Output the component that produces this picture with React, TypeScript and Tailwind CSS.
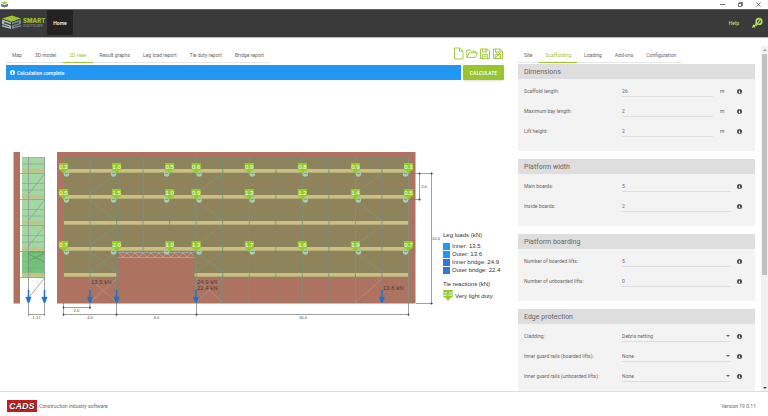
// src/App.tsx

import React from 'react';

interface Field {
  id: string;
  label: string;
  value: string;
  unit?: string;
  select?: boolean;
}

interface Section {
  title: string;
  fields: Field[];
}

const viewTabs = ['Map', '3D model', '2D view', 'Result graphs', 'Leg load report', 'Tie duty report', 'Bridge report'];
const settingTabs = ['Site', 'Scaffolding', 'Loading', 'Add-ons', 'Configuration'];

const sections: Section[] = [
  {
    title: 'Dimensions',
    fields: [
      { id: 'length', label: 'Scaffold length:', value: '26', unit: 'm' },
      { id: 'bay', label: 'Maximum bay length:', value: '2', unit: 'm' },
      { id: 'lift', label: 'Lift height:', value: '2', unit: 'm' },
    ],
  },
  {
    title: 'Platform width',
    fields: [
      { id: 'main-boards', label: 'Main boards:', value: '5' },
      { id: 'inside-boards', label: 'Inside boards:', value: '2' },
    ],
  },
  {
    title: 'Platform boarding',
    fields: [
      { id: 'boarded', label: 'Number of boarded lifts:', value: '5' },
      { id: 'unboarded', label: 'Number of unboarded lifts:', value: '0' },
    ],
  },
  {
    title: 'Edge protection',
    fields: [
      { id: 'cladding', label: 'Cladding:', value: 'Debris netting', select: true },
      { id: 'rails-boarded', label: 'Inner guard rails (boarded lifts):', value: 'None', select: true },
      { id: 'rails-unboarded', label: 'Inner guard rails (unboarded lifts):', value: 'None', select: true },
    ],
  },
];

const legLoads = [
  { label: 'Inner: 13.5', swatch: 'bg-[#2196f3]' },
  { label: 'Outer: 13.6', swatch: 'bg-[#2196f3]' },
  { label: 'Inner bridge: 24.9', swatch: 'bg-[#2f78d4]' },
  { label: 'Outer bridge: 22.4', swatch: 'bg-[#2f78d4]' },
];

// Drawing geometry
const BAY = 345 / 13;
const postX = Array.from({ length: 14 }, (_, i) => 63.5 + i * BAY);
const liftY = [169, 195, 221, 247, 273];
const tieRows = [
  { y: 163, values: ['0.3', '1.0', '0.5', '0.6', '0.9', '0.8', '0.9', '0.3'] },
  { y: 189, values: ['0.5', '1.5', '1.0', '0.9', '1.3', '1.2', '1.4', '0.5'] },
  { y: 241, values: ['0.7', '2.0', '1.0', '1.3', '1.7', '1.6', '1.9', '0.7'] },
];
const tieBays = [0, 2, 4, 5, 7, 9, 11, 13];
const tieOffset = [3, -3, -3, 3, 3, 3, 3, -3];

const InfoIcon: React.FC<{ className?: string }> = ({ className }) => (
  <svg viewBox="0 0 16 16" className={className} aria-hidden="true">
    <path
      fill="currentColor"
      fillRule="evenodd"
      d="M8 0a8 8 0 1 0 0 16A8 8 0 0 0 8 0ZM6.6 2.6h2.8v2.4H6.6ZM5.4 6.4h4v5h1.2v2H5.4v-2h1.2v-3H5.4Z"
    />
  </svg>
);

const BrandLogo: React.FC = () => (
  <svg viewBox="0 0 45 15" className="h-[15px] w-[45px]" role="img" aria-label="Smart Scaffolder">
    <path d="M0 3.4 10 .6l9 2.8-9.5 3.4Z" fill="#9bc52e" />
    <path d="M0 4.6 9 7.6v1.6L2 7v1.2l7 2.4V14L0 11.4V10l7 2v-.8L0 9Z" fill="#a9b8bc" />
    <path d="M19 4.6l-9 3v1.6L17 7v1.2l-7 2.4V14l9-2.6V10l-7 2v-.8L19 9Z" fill="#77878c" />
    <text x="21" y="8" fill="#9bc52e" fontSize="6" fontWeight="800" fontFamily="Inter, sans-serif">
      SMART
    </text>
    <text x="21" y="12" fill="#708086" fontSize="3" fontWeight="700" fontFamily="Inter, sans-serif">
      SCAFFOLDER
    </text>
  </svg>
);

const KeyIcon: React.FC = () => (
  <svg viewBox="0 0 12 12" className="h-3 w-3" fill="none" stroke="#b5dd62" aria-hidden="true">
    <circle cx="8" cy="4.4" r="2.8" strokeWidth="1.6" />
    <path d="M6 6.4 1.2 10.4M2 8l2.2 2.4M4 6.8l1.8 2M7 5.6 9.2 3.2" strokeWidth="1.3" />
  </svg>
);

const fileIconPaths = [
  { name: 'New', d: 'M1.5 1h5l3.5 3.2v7.8H1.5ZM6.5 1v3.2h3.5' },
  { name: 'Open', d: 'M.8 10V3h3.4l1.2 1.2H9.4v1.6M.8 10.4 3.2 5.8h8.4l-2.4 4.6Z' },
  { name: 'Save', d: 'M1.5 2h7l2 2v7.5h-9ZM3.5 2v3h4.4V2M6.4 2.4v1.8M3.3 11.5V7.4h5.4v4.1M4.4 9.2h3.2' },
  { name: 'Save as', d: 'M1.5 2h7l2 2v7.5h-9ZM3.5 2v3h4.4V2M3.3 11.5V7.4h5.4v4.1M3.6 10.6l6-6.4M4 5.2l4.6 5.4' },
];

const CadsLogo: React.FC = () => (
  <svg viewBox="0 0 31 12" className="h-3 w-[31px]" role="img" aria-label="CADS">
    <rect width="30" height="12" fill="#c4161c" />
    <path d="M0 3h30M0 6h30M0 9h30M6 0v12M12 0v12M18 0v12M24 0v12" stroke="#df6265" strokeWidth="0.3" />
    <text
      x="2"
      y="9.3"
      fill="#fff"
      stroke="#221"
      strokeWidth="0.9"
      paintOrder="stroke"
      fontSize="9"
      fontStyle="italic"
      fontWeight="700"
      fontFamily="'Liberation Sans', sans-serif"
    >
      CADS
    </text>
  </svg>
);

const LegArrow: React.FC<{ x: number }> = ({ x }) => (
  <path d={`M${x - 0.6} 290h1.2v7h2.2l-2 5.5h-1.6l-2-5.5h2.2Z`} fill="#1f72cc" stroke="#1f72cc" strokeWidth="0.3" />
);

const TieTag: React.FC<{ x: number; y: number; value: string }> = ({ x, y, value }) => (
  <g>
    <path d={`M${x - 4.6} ${y}h9.2v7.4h-2L${x} ${y + 11}l-2.6-3.6h-2Z`} fill="#93cb2a" />
    <text x={x} y={y + 5.9} textAnchor="middle" fontSize="6" fill="#fff">
      {value}
    </text>
  </g>
);

const SideElevation: React.FC = () => (
  <g>
    <rect x="13.5" y="152" width="6.5" height="151.5" fill="#ad7360" />
    <rect x="22" y="157.5" width="22.5" height="120.5" fill="#a3d8a3" />
    <rect x="28" y="252" width="16.5" height="21" fill="#72c277" />
    <rect x="22" y="252" width="6" height="21" fill="#7dc982" />
    {liftY.map(y => (
      <g key={y}>
        <path d={`M22 ${y - 11.5}h22.5M22 ${y - 5}h22.5`} stroke="#7bb184" strokeWidth="0.7" />
        <rect x="22" y={y} width="22.5" height="3.5" fill="#c8c282" />
        <path d={`M20 ${y + 4.5}h24.5`} stroke="#8b9b8b" strokeWidth="0.7" />
        <path d={`M28.5 ${y + 25}l16-20`} stroke="#8f9a92" strokeWidth="0.8" />
      </g>
    ))}
    <path d="M28.5 157v146M44.5 157v146" stroke="#929d97" strokeWidth="0.9" />
    <path d="M28.5 252h16M28.5 252v20M28.5 254l16 8M28.5 261l16-8" stroke="#55895d" strokeWidth="0.6" />
    <LegArrow x={28.5} />
    <LegArrow x={44.5} />
    <path d="M28.5 303v13M44.5 303v13M28 314.5h17" stroke="#777" strokeWidth="0.7" fill="none" />
    <text x="36.5" y="318.5" textAnchor="middle" fontSize="4" fill="#444">
      1.17
    </text>
  </g>
);

const FrontElevation: React.FC = () => (
  <g>
    <rect x="57" y="152" width="358.5" height="151.5" fill="#ad7360" />
    <path d="M63.5 158h345v119.5H194V252h-76v25.5H63.5Z" fill="#90825b" />
    <path d="M63.5 158.5h345" stroke="#6f8b6c" strokeWidth="0.7" />
    {liftY.map(y => {
      const boards =
        y === 273 ? [`M63.5 ${y}h54v3.7h-54Z`, `M194 ${y}h214.5v3.7H194Z`] : [`M63.5 ${y}h345v3.7h-345Z`];
      const rails =
        y === 273
          ? `M63.5 ${y - 11.5}h54M194 ${y - 11.5}h214.5M63.5 ${y - 5}h54M194 ${y - 5}h214.5M63.5 ${y + 4.4}h54M194 ${y + 4.4}h214.5`
          : `M63.5 ${y - 11.5}h345M63.5 ${y - 5}h345M63.5 ${y + 4.4}h345`;
      return (
        <g key={y}>
          {boards.map(d => (
            <path key={d} d={d} fill="#c9c083" />
          ))}
          <path d={rails} stroke="#748e6e" strokeWidth="0.7" />
        </g>
      );
    })}
    {postX.map((x, i) => (
      <path
        key={i}
        d={`M${x} 157V${i === 3 || i === 4 ? 257 : 303}`}
        stroke={i % 2 === 0 ? '#6f9080' : '#7a9484'}
        strokeWidth="0.8"
      />
    ))}
    {/* Ledger and facade bracing */}
    <path
      d="M90 193l26.5-19M90 200l26.5 21M90 245l26.5-19M90 252l26.5 20M90 272l26.5-20M196 193l26.5-19M196 200l26.5 21M196 245l26.5-19M196 252l26.5 20M196 272l26.5-20M355.5 193l26.5-19M355.5 200l26.5 21M355.5 245l26.5-19M355.5 252l26.5 20"
      stroke="#76a08a"
      strokeWidth="0.6"
    />
    <path
      d="M90 279l26.5 23M90 302l26.5-23M196 279l26.5 23M196 302l26.5-23M355.5 302l26.5-23"
      stroke="#a99b95"
      strokeWidth="0.7"
    />
    {/* Bridge beam */}
    <path d="M118 252.5h77M118 257.5h77" stroke="#a8a9a2" strokeWidth="0.9" />
    <path
      d="M119 253l4 4 4-4 4 4 4-4 4 4 4-4 4 4 4-4 4 4 4-4 4 4 4-4 4 4 4-4 4 4 4-4 4 4 4-4 4 4"
      fill="none"
      stroke="#b9ada8"
      strokeWidth="0.8"
    />
    <path d="M117.8 252v51M194.3 252v51" stroke="#9b7768" strokeWidth="0.7" />
    {tieRows.map(row =>
      row.values.map((value, i) => (
        <g key={`${row.y}-${i}`}>
          <circle cx={postX[tieBays[i]] + tieOffset[i]} cy={row.y + 11} r="2.7" fill="#a9cdb0" />
          <path
            d={`M${postX[tieBays[i]] + tieOffset[i] - 1.6} ${row.y + 10.4}h3.2`}
            stroke="#62937a"
            strokeWidth="0.8"
          />
          <TieTag x={postX[tieBays[i]]} y={row.y} value={value} />
        </g>
      )),
    )}
    {[90, 116.5, 196, 382].map(x => (
      <LegArrow key={x} x={x} />
    ))}
    <g fontSize="6" fill="#4a3b35">
      <text x="91" y="284">13.5 kN</text>
      <text x="197" y="284">24.9 kN</text>
      <text x="197" y="290">22.4 kN</text>
      <text x="383" y="290">13.6 kN</text>
    </g>
    {/* Dimension lines */}
    <path
      d="M63.5 303v13M90 303v6M63 307.5h27.5M63 314.5h346M116.5 303v13M196.5 303v13M408.5 303v13M411 173.5h22M411 199.5h10M419.5 173v27M416 303.5h17M431.5 173v131"
      stroke="#777"
      strokeWidth="0.7"
      fill="none"
    />
    <path
      d="M63.5 306.5v2M90 306.5v2M63.5 313.5v2M116.5 313.5v2M196.5 313.5v2M408.5 313.5v2M419.5 172.5v2M419.5 198.5v2M431.5 172.5v2M431.5 302.5v2"
      stroke="#444"
      strokeWidth="1.4"
    />
    <g fontSize="4" fill="#444" textAnchor="middle">
      <text x="76.5" y="312">2.0</text>
      <text x="90" y="318.5">4.0</text>
      <text x="156.5" y="318.5">6.0</text>
      <text x="303" y="318.5">16.0</text>
      <text x="424" y="188">2.0</text>
      <text x="436" y="240">10.0</text>
    </g>
  </g>
);

const Tabs: React.FC<{ tabs: string[]; active: string }> = ({ tabs, active }) => (
  <div role="tablist" className="flex gap-px border-b border-[#e6e6e6]">
    {tabs.map(tab => (
      <button
        key={tab}
        role="tab"
        aria-selected={tab === active}
        className={`-mb-px h-4 border-b px-[6px] whitespace-nowrap ${
          tab === active ? 'border-[#9bc52e] text-[#9bc52e]' : 'border-transparent text-[#666]'
        }`}
      >
        {tab}
      </button>
    ))}
  </div>
);

const FieldRow: React.FC<{ field: Field }> = ({ field }) => (
  <div className="flex h-5 items-center">
    <label htmlFor={field.id} className="w-[45%] shrink-0 text-[#666]">
      {field.label}
    </label>
    <div className="relative flex-1 border-b border-[#dedede]">
      {field.select ? (
        <>
          <select id={field.id} defaultValue={field.value} className="block h-[10px] w-full appearance-none bg-transparent">
            <option>{field.value}</option>
          </select>
          <span className="pointer-events-none absolute top-1 right-[1px] border-x-2 border-t-2 border-x-transparent border-t-[#666]" />
        </>
      ) : (
        <input id={field.id} defaultValue={field.value} className="block h-[10px] w-full bg-transparent outline-none" />
      )}
    </div>
    {field.unit && <span className="w-[18px] pl-[7px]">{field.unit}</span>}
    <button aria-label={`About ${field.label}`} className="ml-[6px] text-[#444]">
      <InfoIcon className="size-[5px]" />
    </button>
  </div>
);

const App: React.FC = () => {
  return (
    <div className="flex h-screen flex-col overflow-hidden bg-white font-['Roboto',sans-serif] text-[5px] leading-[8px] text-[#666]">
      <div className="flex h-[9px] shrink-0 items-center justify-between pl-[1px]">
        <svg viewBox="0 0 8 8" className="size-[7px]" aria-hidden="true">
          <path d="m0 2 4-1.5L8 2 4 3.5Z" fill="#9bc52e" />
          <path d="M0 3v3l4 1.5L8 6V3L4 4.5Z" fill="#65757a" />
        </svg>
        <div className="flex gap-[13px] pr-[7px]">
          {[
            { name: 'Minimise', d: 'M0 2.5h5' },
            { name: 'Restore', d: 'M.5 1.5h3v3h-3ZM1.5 1.5v-1h3v3h-1' },
            { name: 'Close', d: 'm.5.5 4 4m0-4-4 4' },
          ].map(control => (
            <button key={control.name} aria-label={control.name}>
              <svg viewBox="0 0 5 5" className="size-[5px]" fill="none" stroke="#333" strokeWidth="0.7">
                <path d={control.d} />
              </svg>
            </button>
          ))}
        </div>
      </div>

      <header className="flex h-[29px] shrink-0 items-start justify-between border-t border-b border-t-[#666] border-b-[#bbb] bg-[#3a3a3a]">
        <div className="flex">
          <div className="flex h-[25px] w-[47px] items-center pl-[2px]">
            <BrandLogo />
          </div>
          <a href="#home" className="flex h-[25px] w-[26px] items-center justify-center bg-[#222] font-medium text-white">
            Home
          </a>
        </div>
        <div className="flex h-[26px] items-center gap-3 pr-[5px] text-[#b5dd62]">
          <a href="#help" className="font-medium">
            Help
          </a>
          <button aria-label="Licence">
            <KeyIcon />
          </button>
        </div>
      </header>

      <div className="grid min-h-0 flex-1 grid-cols-[2fr_1fr]">
        <main className="flex min-w-0 flex-col pt-[9px] pr-2 pl-[6px]">
          <div className="flex items-start justify-between">
            <Tabs tabs={viewTabs} active="2D view" />
            <div className="flex gap-[1px]">
              {fileIconPaths.map(icon => (
                <button key={icon.name} aria-label={icon.name}>
                  <svg viewBox="0 0 12 13" className="h-[13px] w-3" fill="none" stroke="#9bc52e" strokeWidth="0.9">
                    <path d={icon.d} />
                  </svg>
                </button>
              ))}
            </div>
          </div>
          <div className="mt-[2px] flex gap-[2px]">
            <div className="flex h-[15px] flex-1 items-center gap-[2px] bg-[#2196f3] pl-1 font-medium text-white">
              <InfoIcon className="size-[5px]" />
              Calculation complete
            </div>
            <button className="h-[15px] w-[41px] rounded-[1px] bg-[#9bc52e] font-medium text-white shadow-sm">CALCULATE</button>
          </div>

          <div className="mt-[70px] flex items-start pl-[6px]">
            <svg
              viewBox="12 150 428 172"
              className="min-w-0 flex-1"
              fontFamily="'Liberation Sans', sans-serif"
              role="img"
              aria-label="Scaffold elevations"
            >
              <SideElevation />
              <FrontElevation />
            </svg>
            <div className="mt-[81px] w-16 shrink-0 pl-[3px] font-['Liberation_Sans',sans-serif] text-[6px] whitespace-nowrap text-[#333]">
              <h3 className="mb-[3px]">Leg loads (kN)</h3>
              <ul>
                {legLoads.map(item => (
                  <li key={item.label} className="flex items-center gap-[2px]">
                    <span className={`size-[7px] ${item.swatch}`} />
                    {item.label}
                  </li>
                ))}
              </ul>
              <h3 className="mt-[6px] mb-[2px]">Tie reactions (kN)</h3>
              <div className="flex items-center gap-[2px]">
                <svg viewBox="0 0 10 11" className="h-[11px] w-[10px]">
                  <TieTag x={5} y={0} value="2.0" />
                </svg>
                Very light duty
              </div>
            </div>
          </div>
        </main>

        <aside className="flex min-h-0 min-w-0 pl-[6px]">
          <div className="mr-[6px] flex min-h-0 flex-1 flex-col overflow-hidden pt-[9px]">
            <div className="flex shrink-0">
              <Tabs tabs={settingTabs} active="Scaffolding" />
            </div>
            <div className="flex flex-col gap-2 pt-px">
              {sections.map(section => (
                <section key={section.title} className="bg-[#f3f3f3]">
                  <h2 className="flex h-[15px] items-center bg-[#dedede] px-[6px] text-[7px]">{section.title}</h2>
                  <div className="pt-[2px] pr-[13px] pb-[10px] pl-[6px]">
                    {section.fields.map(field => (
                      <FieldRow key={field.id} field={field} />
                    ))}
                  </div>
                </section>
              ))}
            </div>
          </div>
          <div className="mt-2 flex w-[7px] flex-col items-center bg-[#f1f1f1]">
            <span className="my-[3px] border-x-2 border-b-2 border-x-transparent border-b-[#999]" />
            <div className="h-[64%] w-[5px] bg-[#c1c1c1]" />
            <span className="mt-auto mb-[2px] border-x-2 border-t-2 border-x-transparent border-t-[#444]" />
          </div>
        </aside>
      </div>

      <footer className="flex h-[25px] shrink-0 items-center justify-between border-t border-[#ddd] pt-1 pr-3 pl-[7px]">
        <div className="flex items-center gap-[1px]">
          <CadsLogo />
          Construction industry software
        </div>
        <span>Version 19.0.11</span>
      </footer>
    </div>
  );
};

export default App;
